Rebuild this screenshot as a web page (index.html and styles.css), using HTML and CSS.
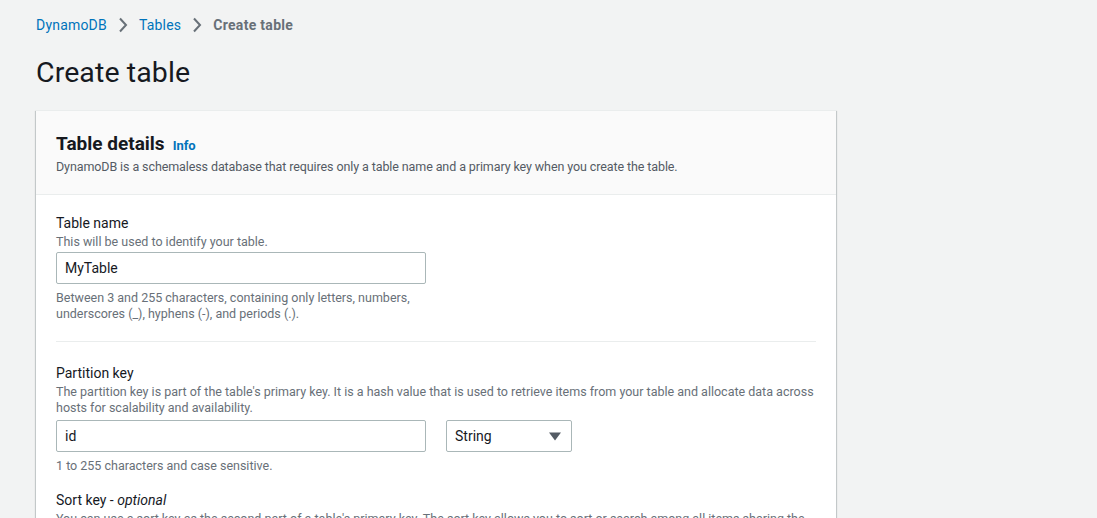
FILE: index.html
```html
<!DOCTYPE html>
<html>
<head>
<meta charset="utf-8">
<link rel="stylesheet" href="styles.css">
</head>
<body>
<div class="page">
  <nav class="crumbs">
    <a class="crumb-link">DynamoDB</a>
    <svg class="chev" width="10" height="16" viewBox="0 0 10 16"><path d="M2 1.5 L8 8 L2 14.5" fill="none" stroke="#687078" stroke-width="2"/></svg>
    <a class="crumb-link">Tables</a>
    <svg class="chev" width="10" height="16" viewBox="0 0 10 16"><path d="M2 1.5 L8 8 L2 14.5" fill="none" stroke="#687078" stroke-width="2"/></svg>
    <span class="crumb-current">Create table</span>
  </nav>
  <h1 class="title">Create table</h1>
  <section class="card">
    <header class="card-head">
      <div class="card-title-row">
        <h2 class="card-title">Table details</h2>
        <a class="info">Info</a>
      </div>
      <p class="card-desc">DynamoDB is a schemaless database that requires only a table name and a primary key when you create the table.</p>
    </header>
    <div class="card-body">
      <div class="field">
        <div class="label">Table name</div>
        <div class="desc">This will be used to identify your table.</div>
        <div class="input">MyTable</div>
        <div class="constraint">Between 3 and 255 characters, containing only letters, numbers,<br>underscores (_), hyphens (-), and periods (.).</div>
      </div>
      <hr class="divider">
      <div class="field">
        <div class="label">Partition key</div>
        <div class="desc">The partition key is part of the table's primary key. It is a hash value that is used to retrieve items from your table and allocate data across<br>hosts for scalability and availability.</div>
        <div class="input-row">
          <div class="input">id</div>
          <div class="select">String<svg width="12" height="9" viewBox="0 0 12 9"><path d="M0 0.5 L12 0.5 L6 8.5 Z" fill="#545b64"/></svg></div>
        </div>
        <div class="constraint">1 to 255 characters and case sensitive.</div>
      </div>
      <div class="field sort">
        <div class="label">Sort key - <i>optional</i></div>
        <div class="desc">You can use a sort key as the second part of a table's primary key. The sort key allows you to sort or search among all items sharing the</div>
      </div>
    </div>
  </section>
</div>
</body>
</html>
```
FILE: styles.css
```css
* { box-sizing: border-box; }
html, body { margin: 0; padding: 0; }
body {
  background: #f2f3f3;
  font-family: Roboto, "Open Sans", sans-serif;
  color: #16191f;
  overflow: hidden;
  height: 518px;
}
.page { padding: 13px 0 0 36px; width: 836px; }
.crumbs { display: flex; align-items: center; gap: 11px; height: 24px; font-size: 14px; letter-spacing: 0.2px; }
.crumb-link { color: #0073bb; }
.crumb-current { color: #687078; font-weight: 700; letter-spacing: 0.3px; }
.chev { display: block; }
.title { font-size: 28.5px; font-weight: 400; margin: 18px 0 19px; line-height: 36px; letter-spacing: 0.1px; }
.card {
  background: #fff;
  box-shadow: 0 1px 1px 0 rgba(0,28,36,0.3), 1px 1px 1px 0 rgba(0,28,36,0.15), -1px 1px 1px 0 rgba(0,28,36,0.15);
  border-top: 1px solid #eaeded;
}
.card-head {
  background: #fafafa;
  border-bottom: 1px solid #eaeded;
  padding: 21px 20px 18px;
}
.card-title-row { display: flex; align-items: baseline; gap: 8px; }
.card-title { margin: 0; font-size: 19px; font-weight: 700; line-height: 24px; }
.info { color: #0073bb; font-size: 13px; font-weight: 700; }
.card-desc { margin: 2px 0 0; font-size: 12.5px; letter-spacing: -0.1px; color: #545b64; line-height: 18px; }
.card-body { padding: 18px 20px 0; }
.label { font-size: 14px; line-height: 20px; }
.desc { font-size: 12.5px; color: #687078; line-height: 16px; margin-top: 1px; }
.field.partition .desc { letter-spacing: -0.1px; }
.input, .select {
  border: 1px solid #aab7b8;
  border-radius: 2px;
  height: 32px;
  padding: 0 8px;
  font-size: 14px;
  display: flex;
  align-items: center;
  background: #fff;
}
.input { width: 370px; margin-top: 2px; }
.input-row { display: flex; gap: 20px; margin-top: 4px; }
.input-row .input { margin-top: 0; }
.select { width: 126px; justify-content: space-between; padding: 0 10px 0 8px; }
.constraint { font-size: 12.5px; color: #687078; line-height: 16px; margin-top: 6px; }
.divider { border: 0; border-top: 1px solid #eaeded; margin: 19px 0 21px; }
.sort { margin-top: 16px; }
```
